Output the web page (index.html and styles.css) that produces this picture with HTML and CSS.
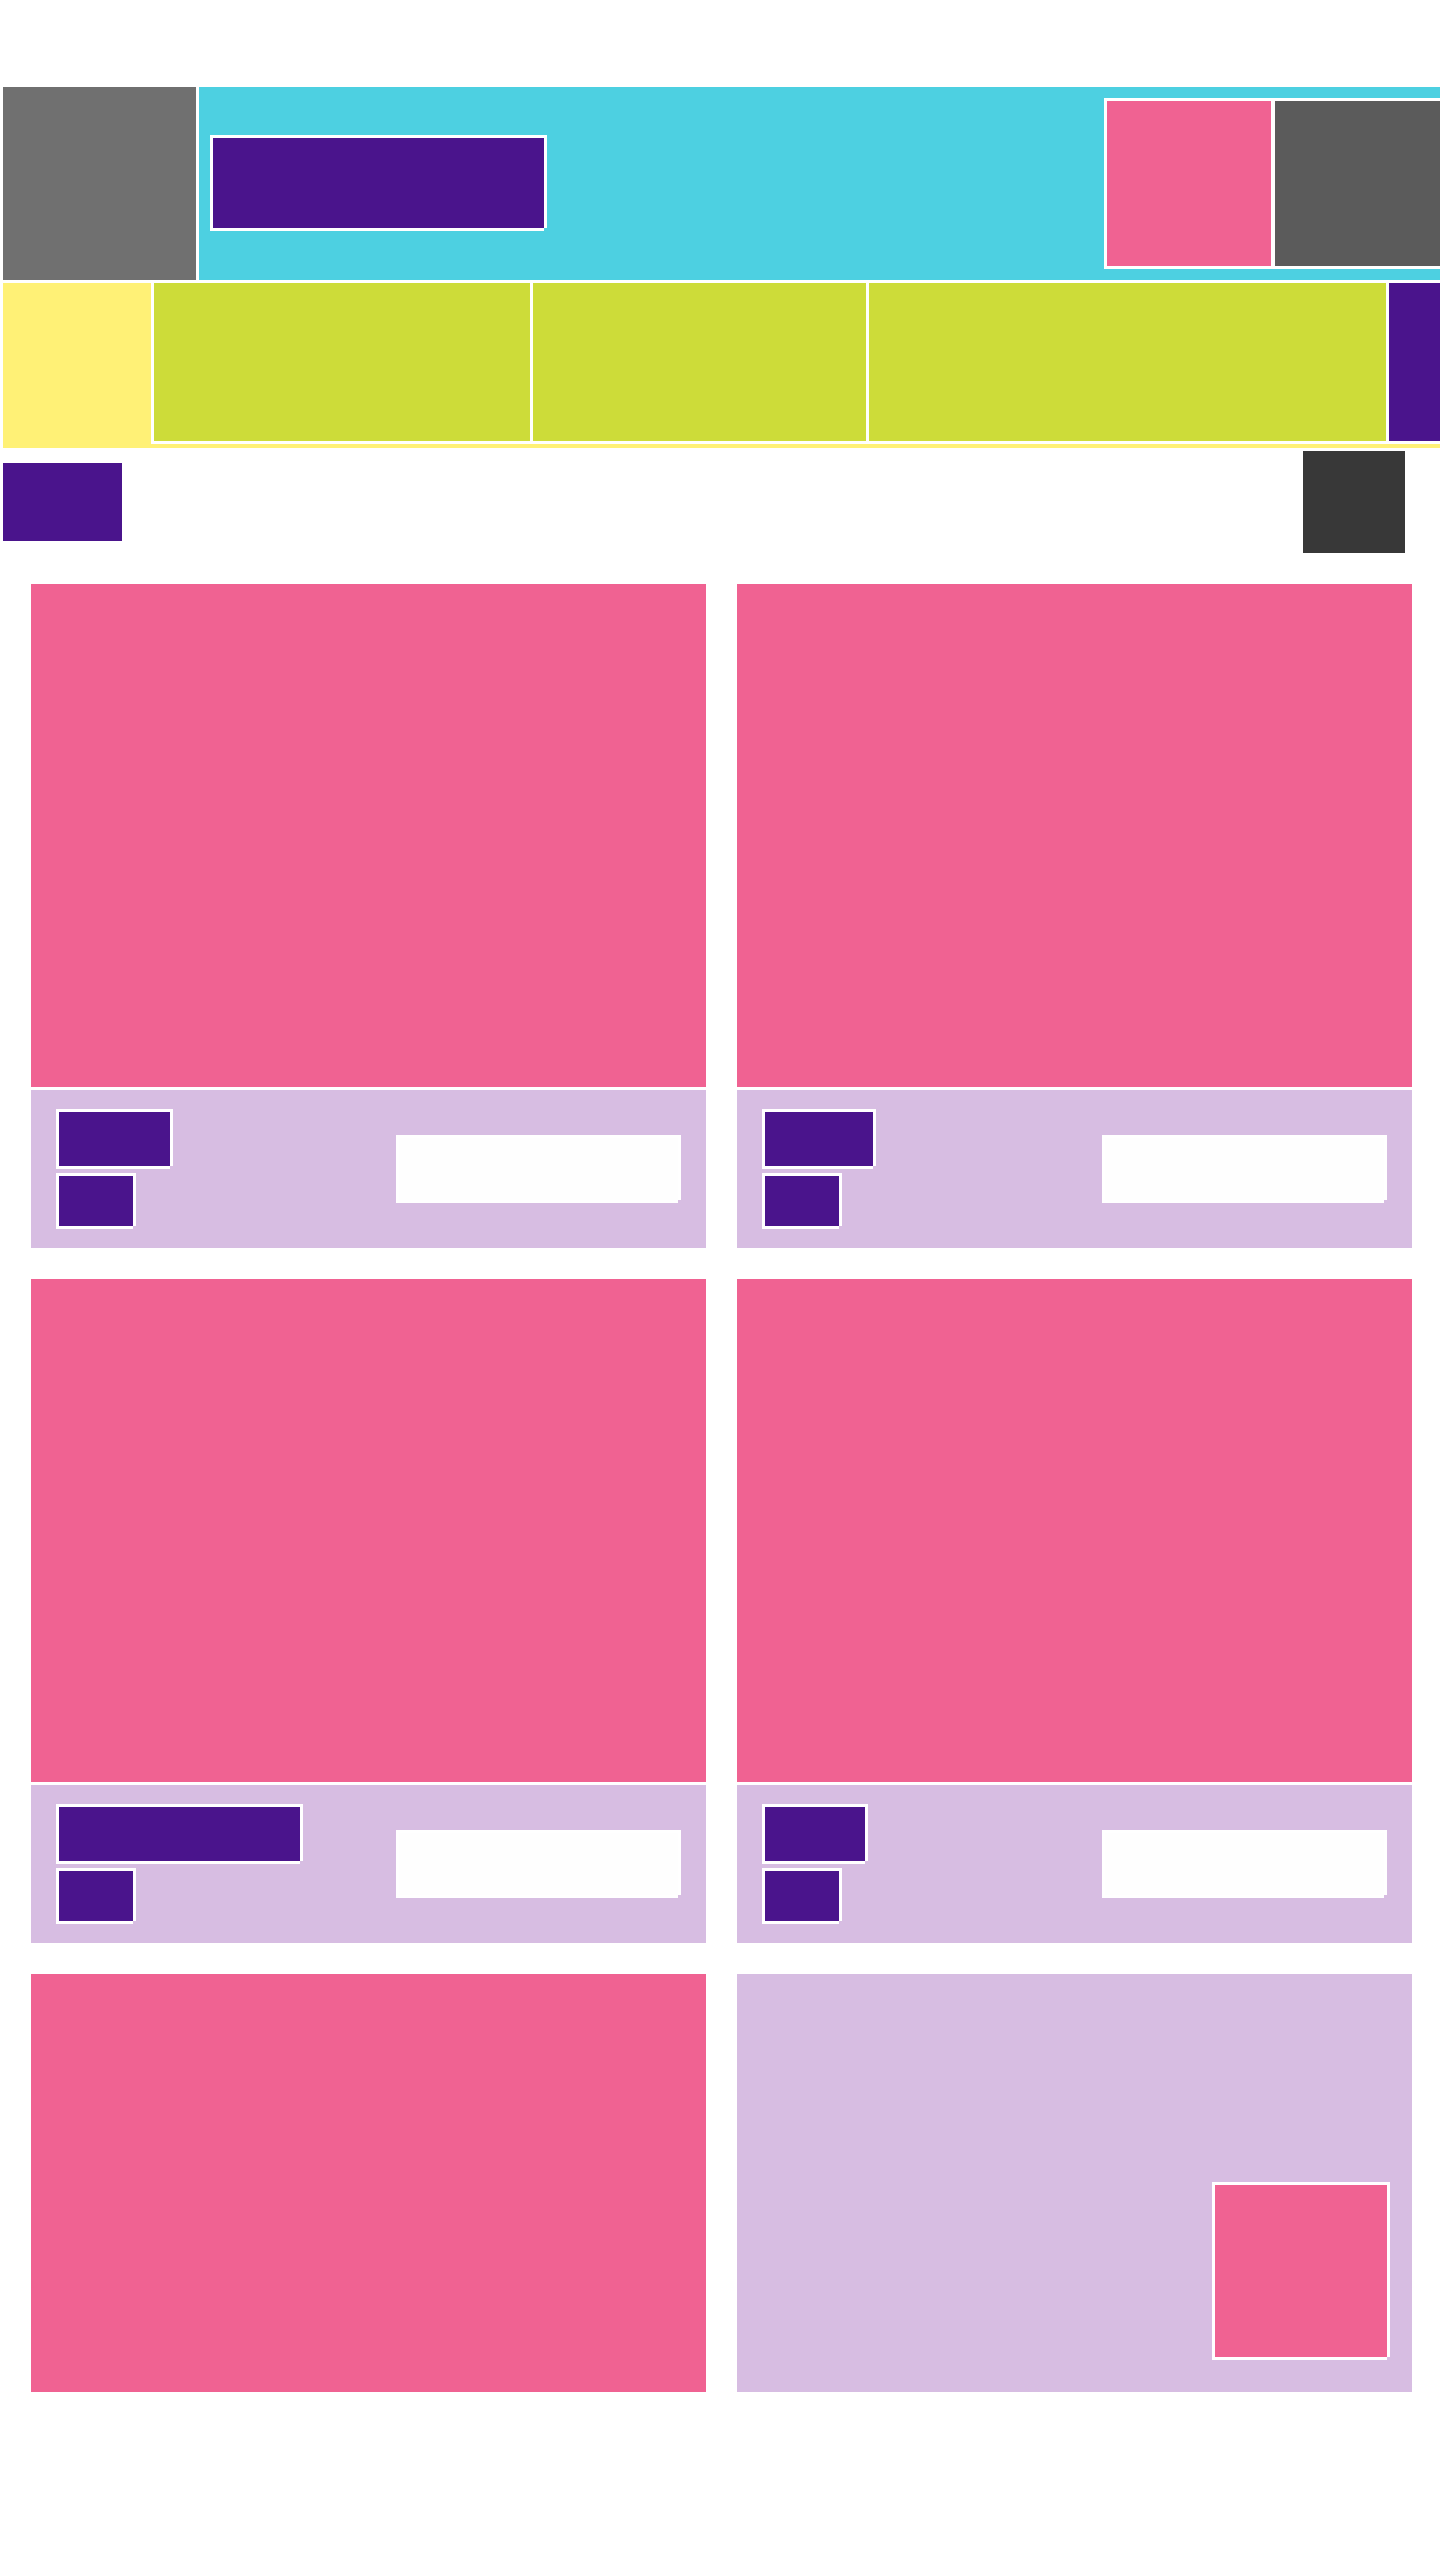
FILE: index.html
```html
<!doctype html>
<html>
<head>
<meta charset="utf-8">
<meta name="viewport" content="width=device-width, initial-scale=1.0">
<link rel="stylesheet" href="styles.css">
<title>Gallery</title>
</head>
<body>
<div class="shell">

<div class="topbar">
  <div class="logo"></div>
  <div class="hero">
    <div class="hero-title frame"></div>
    <div class="hero-tools">
      <div class="tool-pink"></div>
      <div class="tool-dark"></div>
    </div>
  </div>
</div>

<div class="navbar">
  <div class="tabs">
    <div class="tab tab-1"></div>
    <div class="tab tab-2"></div>
    <div class="tab tab-3"></div>
    <div class="tab tab-more"></div>
  </div>
</div>

<div class="toolbar">
  <div class="toolbar-label"></div>
  <div class="toolbar-button"></div>
</div>

<div class="cards">
  <div class="card">
    <div class="card-media"></div>
    <div class="card-foot">
      <div class="card-tags">
        <div class="tag frame" style="width:111px"></div>
        <div class="tag tag-small frame"></div>
      </div>
      <div class="card-action frame"></div>
    </div>
  </div>
  <div class="card">
    <div class="card-media"></div>
    <div class="card-foot">
      <div class="card-tags">
        <div class="tag frame" style="width:108px"></div>
        <div class="tag tag-small frame"></div>
      </div>
      <div class="card-action frame"></div>
    </div>
  </div>
  <div class="card">
    <div class="card-media"></div>
    <div class="card-foot">
      <div class="card-tags">
        <div class="tag frame" style="width:241px"></div>
        <div class="tag tag-small frame"></div>
      </div>
      <div class="card-action frame"></div>
    </div>
  </div>
  <div class="card">
    <div class="card-media"></div>
    <div class="card-foot">
      <div class="card-tags">
        <div class="tag frame" style="width:100px"></div>
        <div class="tag tag-small frame"></div>
      </div>
      <div class="card-action frame"></div>
    </div>
  </div>
  <div class="card card-short">
    <div class="card-media card-media-full"></div>
  </div>
  <div class="card card-short">
    <div class="card-blank">
      <div class="card-thumb frame"></div>
    </div>
  </div>
</div>

</div>
</body>
</html>
```

FILE: styles.css
```css
html,
body {
    margin: 0;
    padding: 0;
}
body {
    font-family: "Liberation Sans", Arial, sans-serif;
    background-color: #fff;
    height: 2560px;
}
.shell {
    width: 1440px;
    overflow: hidden;
    padding-top: 87px;
}

/* white 3px frame, bottom-right corner left open */
.frame {
    box-shadow: -3px -3px 0 #fff, 3px -3px 0 #fff, 3px 0 0 #fff, -3px 3px 0 #fff, 0 3px 0 #fff;
}

.topbar {
    display: flex;
    gap: 3px;
    height: 193px;
    margin-left: 3px;
}
.logo {
    width: 193px;
    flex-shrink: 0;
    background-color: #707070;
}
.hero {
    flex: 1;
    display: flex;
    align-items: flex-start;
    padding-left: 14px;
    background-color: #4dd0e1;
    overflow: hidden;
}
.hero-title {
    width: 331px;
    height: 90px;
    flex-shrink: 0;
    margin-top: 51px;
    background-color: #4a148c;
}
.hero-tools {
    display: flex;
    gap: 4px;
    flex-shrink: 0;
    margin-top: 11px;
    margin-left: 560px;
    padding: 3px;
    background-color: #fff;
}
.tool-pink {
    width: 164px;
    height: 165px;
    background-color: #f06292;
}
.tool-dark {
    width: 220px;
    height: 165px;
    background-color: #5b5b5b;
}

.navbar {
    display: flex;
    align-items: flex-start;
    height: 165px;
    margin: 3px 0 0 3px;
    padding-left: 148px;
    background-color: #fff176;
    overflow: hidden;
}
.tabs {
    display: flex;
    gap: 3px;
    flex-shrink: 0;
    padding: 0 0 3px 3px;
    background-color: #fff;
}
.tab {
    height: 158px;
    background-color: #cddc39;
}
.tab-1 {
    width: 376px;
}
.tab-2 {
    width: 333px;
}
.tab-3 {
    width: 517px;
}
.tab-more {
    width: 120px;
    background-color: #4a148c;
}

.toolbar {
    display: flex;
    align-items: center;
    justify-content: space-between;
    padding: 3px 35px 0 3px;
}
.toolbar-label {
    width: 119px;
    height: 78px;
    background-color: #4a148c;
}
.toolbar-button {
    width: 102px;
    height: 102px;
    background-color: #383838;
}

.cards {
    display: grid;
    grid-template-columns: 675px 675px;
    gap: 31px;
    margin-top: 31px;
    padding: 0 28px 0 31px;
}
.card {
    display: flex;
    flex-direction: column;
    gap: 3px;
}
.card-media {
    height: 503px;
    background-color: #f06292;
}
.card-foot {
    display: flex;
    align-items: center;
    justify-content: space-between;
    height: 158px;
    padding: 0 28px;
    background-color: #d7bde2;
}
.card-tags {
    display: flex;
    flex-direction: column;
    gap: 10px;
}
.tag {
    height: 54px;
    background-color: #4a148c;
}
.tag-small {
    width: 74px;
    height: 50px;
}
.card-action {
    width: 279px;
    height: 62px;
    background-color: #fefefe;
}
.card-short {
    height: 418px;
}
.card-media-full {
    height: 418px;
}
.card-blank {
    display: flex;
    align-items: flex-end;
    justify-content: flex-end;
    height: 418px;
    padding: 0 25px 35px 0;
    box-sizing: border-box;
    background-color: #d7bde2;
}
.card-thumb {
    width: 172px;
    height: 172px;
    background-color: #f06292;
}
```
